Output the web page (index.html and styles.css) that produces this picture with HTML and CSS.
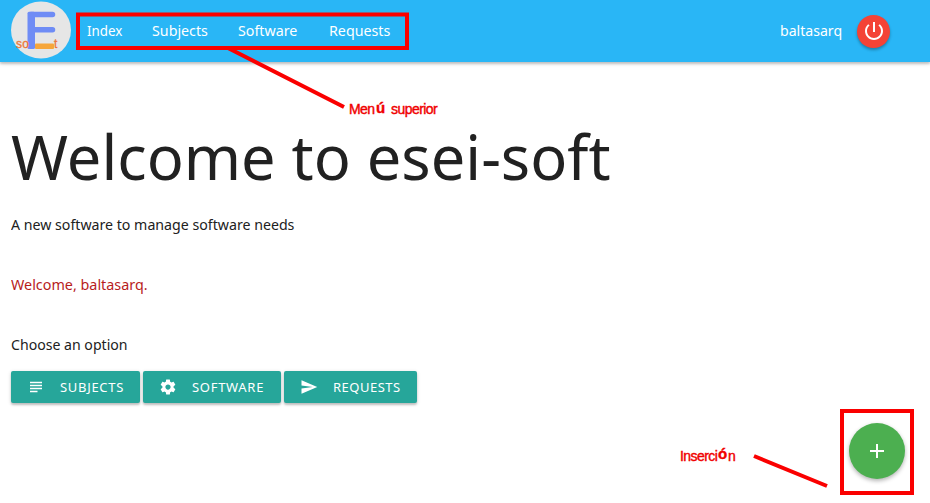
FILE: index.html
```html
<!DOCTYPE html>
<html lang="en">
<head>
<meta charset="utf-8">
<title>esei-soft</title>
<link rel="stylesheet" href="styles.css">
</head>
<body>
<nav class="topbar">
  <svg class="logo" width="60" height="58" viewBox="0 0 60 58">
    <ellipse cx="30" cy="29" rx="30" ry="28.5" fill="#e6e6e6"/>
    <path d="M20 13.4H41.5M20 28.8H41.5" fill="none" stroke="#6f8cf5" stroke-width="5.5" stroke-linecap="round"/>
    <rect x="16.5" y="10.7" width="7.5" height="37.3" rx="1.5" fill="#6f8cf5"/>
    <text class="logo-text" x="5" y="47" textLength="13">so</text>
    <rect x="24" y="42.5" width="19" height="5.5" rx="1" fill="#f6a63a"/>
    <text class="logo-text" x="43" y="47">t</text>
  </svg>
  <div class="menu">
    <a class="index">Index</a><a class="subjects">Subjects</a><a class="software">Software</a><a class="requests">Requests</a>
  </div>
  <span class="user">baltasarq</span>
  <span class="power">
    <svg width="24" height="24" viewBox="0 0 24 24" fill="#fff"><path d="M13 3h-2v10h2V3zm4.83 2.17l-1.42 1.42C17.99 7.86 19 9.81 19 12c0 3.87-3.13 7-7 7s-7-3.13-7-7c0-2.19 1.01-4.14 2.58-5.42L6.17 5.17C4.23 6.82 3 9.26 3 12c0 4.97 4.03 9 9 9s9-4.03 9-9c0-2.74-1.23-5.18-3.17-6.83z"/></svg>
  </span>
</nav>
<main class="content">
  <h1>Welcome to esei-soft</h1>
  <p class="intro">A new software to manage software needs</p>
  <p class="greeting">Welcome, baltasarq.</p>
  <p class="choose">Choose an option</p>
  <div class="buttons">
    <a class="btn btn-subjects"><svg width="18" height="18" viewBox="0 0 24 24" fill="#fff"><path d="M14 17H4v2h10v-2zm6-8H4v2h16V9zM4 15h16v-2H4v2zM4 5v2h16V5H4z"/></svg><span>SUBJECTS</span></a>
    <a class="btn btn-software"><svg width="18" height="18" viewBox="0 0 24 24" fill="#fff"><path d="M19.43 12.98c.04-.32.07-.64.07-.98s-.03-.66-.07-.98l2.11-1.65c.19-.15.24-.42.12-.64l-2-3.46c-.12-.22-.39-.3-.61-.22l-2.49 1c-.52-.4-1.08-.73-1.69-.98l-.38-2.65C14.46 2.18 14.25 2 14 2h-4c-.25 0-.46.18-.49.42l-.38 2.65c-.61.25-1.17.59-1.69.98l-2.49-1c-.23-.09-.49 0-.61.22l-2 3.46c-.13.22-.07.49.12.64l2.11 1.65c-.04.32-.07.65-.07.98s.03.66.07.98l-2.11 1.65c-.19.15-.24.42-.12.64l2 3.46c.12.22.39.3.61.22l2.49-1c.52.4 1.08.73 1.69.98l.38 2.65c.03.24.24.42.49.42h4c.25 0 .46-.18.49-.42l.38-2.65c.61-.25 1.17-.59 1.69-.98l2.49 1c.23.09.49 0 .61-.22l2-3.46c.12-.22.07-.49-.12-.64l-2.11-1.65zM12 15.5c-1.93 0-3.5-1.57-3.5-3.5s1.57-3.5 3.5-3.5 3.5 1.57 3.5 3.5-1.57 3.5-3.5 3.5z"/></svg><span>SOFTWARE</span></a>
    <a class="btn btn-requests"><svg width="18" height="18" viewBox="0 0 24 24" fill="#fff"><path d="M2.01 21L23 12 2.01 3 2 10l15 2-15 2z"/></svg><span>REQUESTS</span></a>
  </div>
</main>
<div class="fab"><svg width="24" height="24" viewBox="0 0 24 24" fill="#fff"><path d="M19 13h-6v6h-2v-6H5v-2h6V5h2v6h6v2z"/></svg></div>
<svg class="marks" width="930" height="503" viewBox="0 0 930 503">
  <g fill="none" stroke="#fa0000" stroke-width="4">
    <rect x="78" y="14.5" width="329" height="33.5"/>
    <path d="M228 48L344 107M754 456L827 486"/>
    <rect x="842" y="411" width="70" height="82"/>
  </g>
  <g class="note">
    <text x="349" y="114">Men<tspan class="accent" x="376" y="113">ú</tspan><tspan x="391" y="114">superior</tspan></text>
    <text x="680" y="461">Inserci<tspan class="accent" x="718" y="459">ó</tspan><tspan x="728" y="461">n</tspan></text>
  </g>
</svg>
</body>
</html>
```
FILE: styles.css
```css
* { box-sizing: border-box; }
body {
  margin: 0;
  height: 503px;
  overflow: hidden;
  position: relative;
  background: #fff;
  color: #212121;
  font: 15px/24px "Noto Sans", sans-serif;
}
.topbar {
  display: flex;
  align-items: center;
  height: 62px;
  padding: 0 40px 0 11px;
  background: #29b6f6;
  color: #fff;
  box-shadow: 0 2px 2px rgba(0,0,0,.16), 0 1px 5px rgba(0,0,0,.16);
}
.logo { flex: none; margin-top: -3px; }
.logo-text { font: 12px "Liberation Sans", sans-serif; fill: #ed7636; stroke: #ed7636; stroke-width: .3px; }
.menu { display: flex; gap: 30px; margin: -2px 0 0 16px; }
.menu a { white-space: nowrap; transform: scaleX(.95); transform-origin: left; }
.menu .index { width: 35px; transform: scaleX(.89); }
.subjects { width: 56px; }
.software { width: 61px; }
.user { margin: -2px 0 0 auto; transform: scaleX(.94); transform-origin: right; }
.power {
  display: grid;
  place-items: center;
  width: 33px;
  height: 33px;
  margin-left: 15px;
  border-radius: 50%;
  background: #f44336;
  box-shadow: 0 2px 3px rgba(0,0,0,.3);
}
.content { padding: 0 11px; }
h1 {
  margin: 60px 0 0;
  height: 68px;
  font-size: 62px;
  font-weight: 400;
  line-height: 68px;
  white-space: nowrap;
  transform: scaleX(.989);
  transform-origin: left;
}
p { margin: 0; transform: scaleX(.945); transform-origin: left; }
.intro { margin-top: 22px; }
.greeting { margin-top: 36px; color: #b71c1c; transform: scaleX(.957); }
.choose { margin-top: 36px; transform: scaleX(.94); }
.buttons { display: flex; gap: 3px; margin-top: 15px; }
.btn {
  display: flex;
  align-items: center;
  gap: 15px;
  height: 32px;
  padding-left: 16px;
  border-radius: 2px;
  background: #26a69a;
  color: #fff;
  font-size: 13px;
  letter-spacing: .7px;
  box-shadow: 0 2px 2px rgba(0,0,0,.18), 0 1px 4px rgba(0,0,0,.14);
}
.btn-subjects { width: 129px; }
.btn-software { width: 138px; }
.btn-requests { width: 133px; letter-spacing: .5px; }
.fab {
  position: absolute;
  left: 849px;
  top: 423px;
  display: grid;
  place-items: center;
  width: 56px;
  height: 56px;
  border-radius: 50%;
  background: #4caf50;
  box-shadow: 0 2px 4px rgba(0,0,0,.3);
}
.marks { position: absolute; left: 0; top: 0; pointer-events: none; }
.note { font: 14px "Liberation Sans", sans-serif; letter-spacing: -.55px; fill: #f00000; stroke: #f00000; stroke-width: .4px; }
.accent { font-weight: 700; font-size: 15px; }
```
